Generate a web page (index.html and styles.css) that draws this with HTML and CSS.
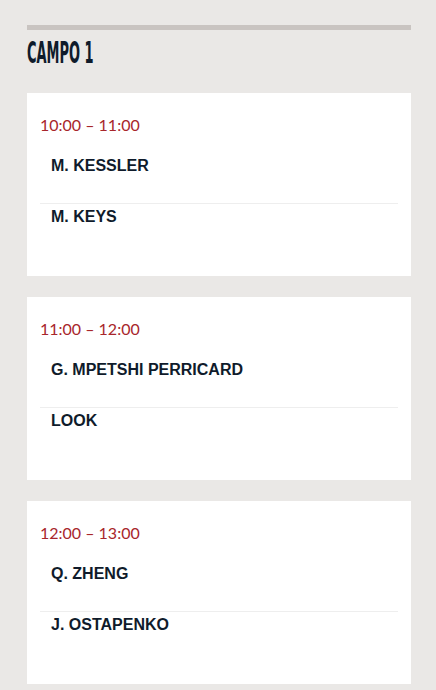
FILE: index.html
```html
<!DOCTYPE html>
<html lang="it">
<head>
    <meta charset="UTF-8">
    <meta name="viewport" content="width=device-width, initial-scale=1.0">
    <title>Campo 1</title>
    <link rel="stylesheet" href="styles.css">
</head>
<body>
    <div class="campo">
        <div class="campo-bar"></div>
        <h2 class="campo-title"><span>CAMPO 1</span></h2>

        <div class="match">
            <div class="match-time">10:00 – 11:00</div>
            <div class="player player-first">M. KESSLER</div>
            <div class="player">M. KEYS</div>
        </div>

        <div class="match">
            <div class="match-time">11:00 – 12:00</div>
            <div class="player player-first">G. MPETSHI PERRICARD</div>
            <div class="player">LOOK</div>
        </div>

        <div class="match">
            <div class="match-time">12:00 – 13:00</div>
            <div class="player player-first">Q. ZHENG</div>
            <div class="player">J. OSTAPENKO</div>
        </div>
    </div>
</body>
</html>
```

FILE: styles.css
```css
body {
    margin: 0;
    padding: 0;
    background: #eae8e6;
    font-family: "Liberation Sans", Arial, sans-serif;
}
.campo {
    padding: 25px 25px 0 27px;
}
.campo-bar {
    height: 5px;
    background: #c9c4c1;
}
.campo-title {
    margin: 0;
    height: 63px;
    padding-top: 8px;
    box-sizing: border-box;
    font-family: "DejaVu Sans Condensed", sans-serif;
    font-size: 30px;
    line-height: 30px;
    font-weight: bold;
    color: #0f1b2b;
}
.campo-title span {
    display: inline-block;
    transform: scaleX(0.48);
    transform-origin: left center;
}
.match {
    background: white;
    padding: 22px 13px;
    margin-bottom: 21px;
}
.match-time {
    font-family: Lato, sans-serif;
    font-size: 16px;
    line-height: 20px;
    color: #a8262b;
    margin-bottom: 18px;
}
.player {
    font-size: 16px;
    line-height: 20px;
    font-weight: bold;
    color: #0f1b2b;
    padding: 3px 11px 27px;
}
.player-first {
    border-bottom: 1px solid #eeeeee;
}
```
